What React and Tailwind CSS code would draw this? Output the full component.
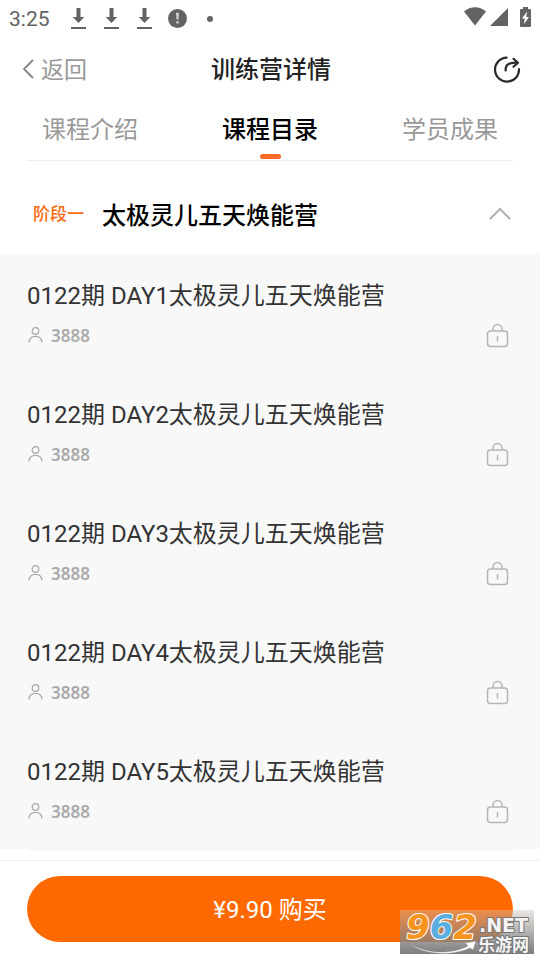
import React from "react";

const lessons = [1, 2, 3, 4, 5].map((day) => ({
  id: day,
  title: `0122期 DAY${day}太极灵儿五天焕能营`,
  students: 3888,
}));

const tabs = ["课程介绍", "课程目录", "学员成果"];

function DownloadIcon() {
  return (
    <svg width="15" height="21" viewBox="0 0 15 21" fill="#636363" aria-hidden="true">
      <path d="M5.500 0h4v9h3.800L7.500 15 1.700 9h3.800z" />
      <path d="M0 19h15v2H0z" />
    </svg>
  );
}

function StatusBar() {
  return (
    <div className="flex h-[37px] items-center justify-between px-[9px] text-[#636363]">
      <div className="flex items-center">
        <span className="w-[62px] text-[21px] leading-6">3:25</span>
        <div className="flex items-center gap-[18px]">
          <DownloadIcon />
          <DownloadIcon />
          <DownloadIcon />
        </div>
        <svg className="ml-4" width="19" height="19" viewBox="0 0 19 19" aria-hidden="true">
          <circle cx="9.5" cy="9.5" r="9.5" fill="#636363" />
          <path d="M8 3.8h3l-.5 6.8h-2zM8.3 12.2h2.4v2.4H8.3z" fill="#d0d0d0" />
        </svg>
        <span className="ml-5 size-[6px] rounded-full bg-[#636363]" />
      </div>
      <div className="flex items-center pb-1">
        <svg width="22" height="19" viewBox="0 0 22 19" fill="#636363" aria-hidden="true">
          <path d="M0 4.6C6.5-1.2 15.5-1.2 22 4.6L11 18.5z" />
        </svg>
        <svg className="ml-1" width="18" height="18" viewBox="0 0 18 18" fill="#636363" aria-hidden="true">
          <path d="M18 0v18H0z" />
        </svg>
        <svg className="ml-3" width="11" height="20" viewBox="0 0 11 20" aria-hidden="true">
          <path d="M3 0h5v2h2q1 0 1 1v16q0 1-1 1H1q-1 0-1-1V3q0-1 1-1h2z" fill="#636363" />
          <path d="M7 4.5 2 11.5h2.700L4 17l5-7H6.300z" fill="#fff" />
        </svg>
      </div>
    </div>
  );
}

function NavBar() {
  return (
    <header className="grid h-[66px] grid-cols-[1fr_auto_1fr] items-center pr-[19px] pl-[21px]">
      <button type="button" className="flex items-center gap-[6px] pt-px text-[23px] leading-8 text-[#999]">
        <svg className="mb-1" width="14" height="20" viewBox="0 0 14 20" fill="none" stroke="#858585" strokeWidth="1.8" aria-hidden="true">
          <path d="M12 1 3 10l9 9" />
        </svg>
        返回
      </button>
      <h1 className="text-2xl font-medium text-[#222]">训练营详情</h1>
      <button type="button" aria-label="分享" className="justify-self-end">
        <svg width="28" height="28" viewBox="0 0 28 28" fill="none" stroke="#292929" strokeWidth="2.200" aria-hidden="true">
          <path d="M13.500 1.600A12 12 0 1 0 26 13" strokeLinecap="round" />
          <path d="M12.700 14.500c-.7-5.500 3-8.300 11.500-7.800" strokeLinecap="round" />
          <path d="m20.500 2.800 4.500 4-4.500 4" strokeLinecap="round" strokeLinejoin="round" />
        </svg>
      </button>
    </header>
  );
}

function Tabs() {
  return (
    <nav className="mx-[27px] flex justify-between border-b border-[#eeeeee] px-[15px]">
      {tabs.map((tab, i) => (
        <button
          key={tab}
          type="button"
          className={
            i === 1
              ? "flex h-[57px] flex-col items-center text-2xl leading-[54px] font-medium text-black"
              : "flex h-[57px] flex-col items-center text-2xl leading-[54px] text-[#999]"
          }
        >
          <span className="h-[51px]">{tab}</span>
          {i === 1 && <span className="h-[5px] w-[21px] rounded-full bg-[#fa6a25]" />}
        </button>
      ))}
    </nav>
  );
}

function Lesson({ title, students }) {
  return (
    <li className="h-[119px] px-[27px] pt-6">
      <h3 className="text-2xl leading-9 text-[#333]">{title}</h3>
      <div className="mt-1 flex items-center justify-between pr-1">
        <div className="flex items-center gap-2 pl-px text-[17px] leading-9 text-[#aaa]">
          <svg className="mb-[2px]" width="15" height="16" viewBox="0 0 15 16" fill="none" stroke="#a8a8a8" strokeWidth="1.2" aria-hidden="true">
            <circle cx="7.5" cy="4" r="3.3" />
            <path d="M1 15.500c.2-4 2.700-6.200 6.500-6.200s6.300 2.200 6.500 6.200" />
          </svg>
          <span className="font-['Noto_Sans'] font-semibold">{students}</span>
        </div>
        <svg className="mb-[2px]" width="23" height="25" viewBox="0 0 23 25" fill="none" stroke="#b5b5b5" strokeWidth="1.5" role="img" aria-label="未解锁">
          <rect x="1.5" y="8" width="20" height="15.500" rx="3" />
          <path d="M7 8V6a4.500 4.500 0 0 1 9 0v2M11.500 13v5.500" />
        </svg>
      </div>
    </li>
  );
}

function Watermark() {
  return (
    <div className="absolute right-[6px] bottom-[6px] h-11 w-[134px] bg-linear-to-b from-[#d0c4bc]/40 to-[#777]/95" aria-hidden="true">
      <svg className="overflow-visible" width="134" height="44" viewBox="0 0 134 44">
        <text x="6" y="29" fontFamily="DejaVu Sans, sans-serif" fontWeight="bold" fontStyle="italic" fontSize="34" stroke="#fff" strokeWidth="2" paintOrder="stroke" strokeLinejoin="round">
          <tspan fill="#f7941d">9</tspan>
          <tspan fill="#5aaee0">6</tspan>
          <tspan fill="#f7941d">2</tspan>
        </text>
        <path d="M8 33c20 12 45 11 60 3l-3-3 11-2-3 9-3-2C53 46 25 46 8 33z" fill="#fff" stroke="#888" strokeWidth=".5" />
        <g fill="#f4f4f4" stroke="#777" strokeWidth="2" paintOrder="stroke" fontWeight="bold">
          <text x="79" y="22" fontFamily="DejaVu Sans, sans-serif" fontSize="19">.NET</text>
          <text x="78" y="41" fontFamily="Noto Sans CJK SC, sans-serif" fontSize="17">乐游网</text>
        </g>
      </svg>
    </div>
  );
}

export default function App() {
  return (
    <div className="relative flex min-h-screen flex-col bg-white font-[Roboto,'Noto_Sans_CJK_SC',sans-serif]">
      <StatusBar />
      <NavBar />
      <Tabs />
      <main className="grow">
        <section>
          <h2>
            <button type="button" aria-expanded="true" className="flex h-[93px] w-full items-center pt-7 pr-[29px] pb-3 pl-[33px] text-left">
              <span className="w-[69px] pb-1 text-[17px] leading-6 font-medium text-[#fb6b13]">阶段一</span>
              <span className="grow text-2xl font-medium text-black">太极灵儿五天焕能营</span>
              <svg className="mb-1" width="22" height="14" viewBox="0 0 22 14" fill="none" stroke="#b0b0b0" strokeWidth="2" aria-hidden="true">
                <path d="M1 12 11 2l10 10" />
              </svg>
            </button>
          </h2>
          <ul className="bg-[#f8f8f8]">
            {lessons.map((lesson) => (
              <Lesson key={lesson.id} title={lesson.title} students={lesson.students} />
            ))}
          </ul>
        </section>
        <hr className="mx-[27px] border-[#f3f3f3]" />
      </main>
      <footer className="border-t border-[#eeeeee] px-[27px] pt-[15px] pb-[18px]">
        <button type="button" className="h-[66px] w-full rounded-full bg-[#ff6900] pt-px text-2xl text-white">
          ¥9.90 购买
        </button>
      </footer>
      <Watermark />
    </div>
  );
}
